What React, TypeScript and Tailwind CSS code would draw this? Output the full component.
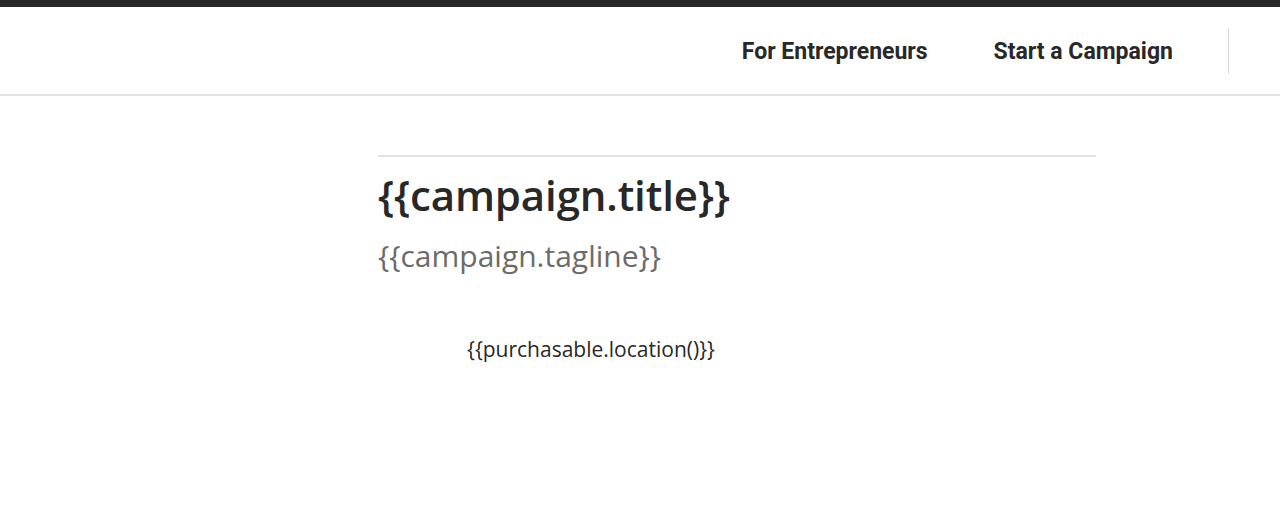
export default function App() {
  return (
    <div className="min-h-[515px] bg-white font-['Open_Sans',sans-serif] text-[#282828]">
      {/* Top strip */}
      <div className="h-[7px] bg-[#282828]" />

      {/* Header */}
      <header className="h-[89px] border-b-2 border-[#e3e3e3] flex items-center justify-end">
        <nav className="flex items-center h-full">
          <a className="pt-[4px] text-[23px] font-bold font-['Roboto',sans-serif] text-[#282828]">
            For Entrepreneurs
          </a>
          <a className="pt-[4px] ml-[66px] text-[23px] font-bold font-['Roboto',sans-serif] text-[#282828]">
            Start a Campaign
          </a>
          <div className="ml-[55px] mr-[51px] w-px h-[46px] bg-[#dcdcdc]" />
        </nav>
      </header>

      {/* Campaign */}
      <main className="ml-[378px] w-[718px] pt-[59px]">
        <div className="border-t-2 border-[#e3e3e3]" />
        <h1 className="mt-[12px] text-[42px] leading-[52px] font-semibold tracking-[-0.15px]">
          {"{{campaign.title}}"}
        </h1>
        <p className="mt-[16px] text-[30px] leading-[38px] text-[#6b6b6b]">
          {"{{campaign.tagline}}"}
        </p>
        <p className="mt-[60px] ml-[89px] text-[21px] leading-[28px] text-[#282828]">
          {"{{purchasable.location()}}"}
        </p>
      </main>
    </div>
  );
}
